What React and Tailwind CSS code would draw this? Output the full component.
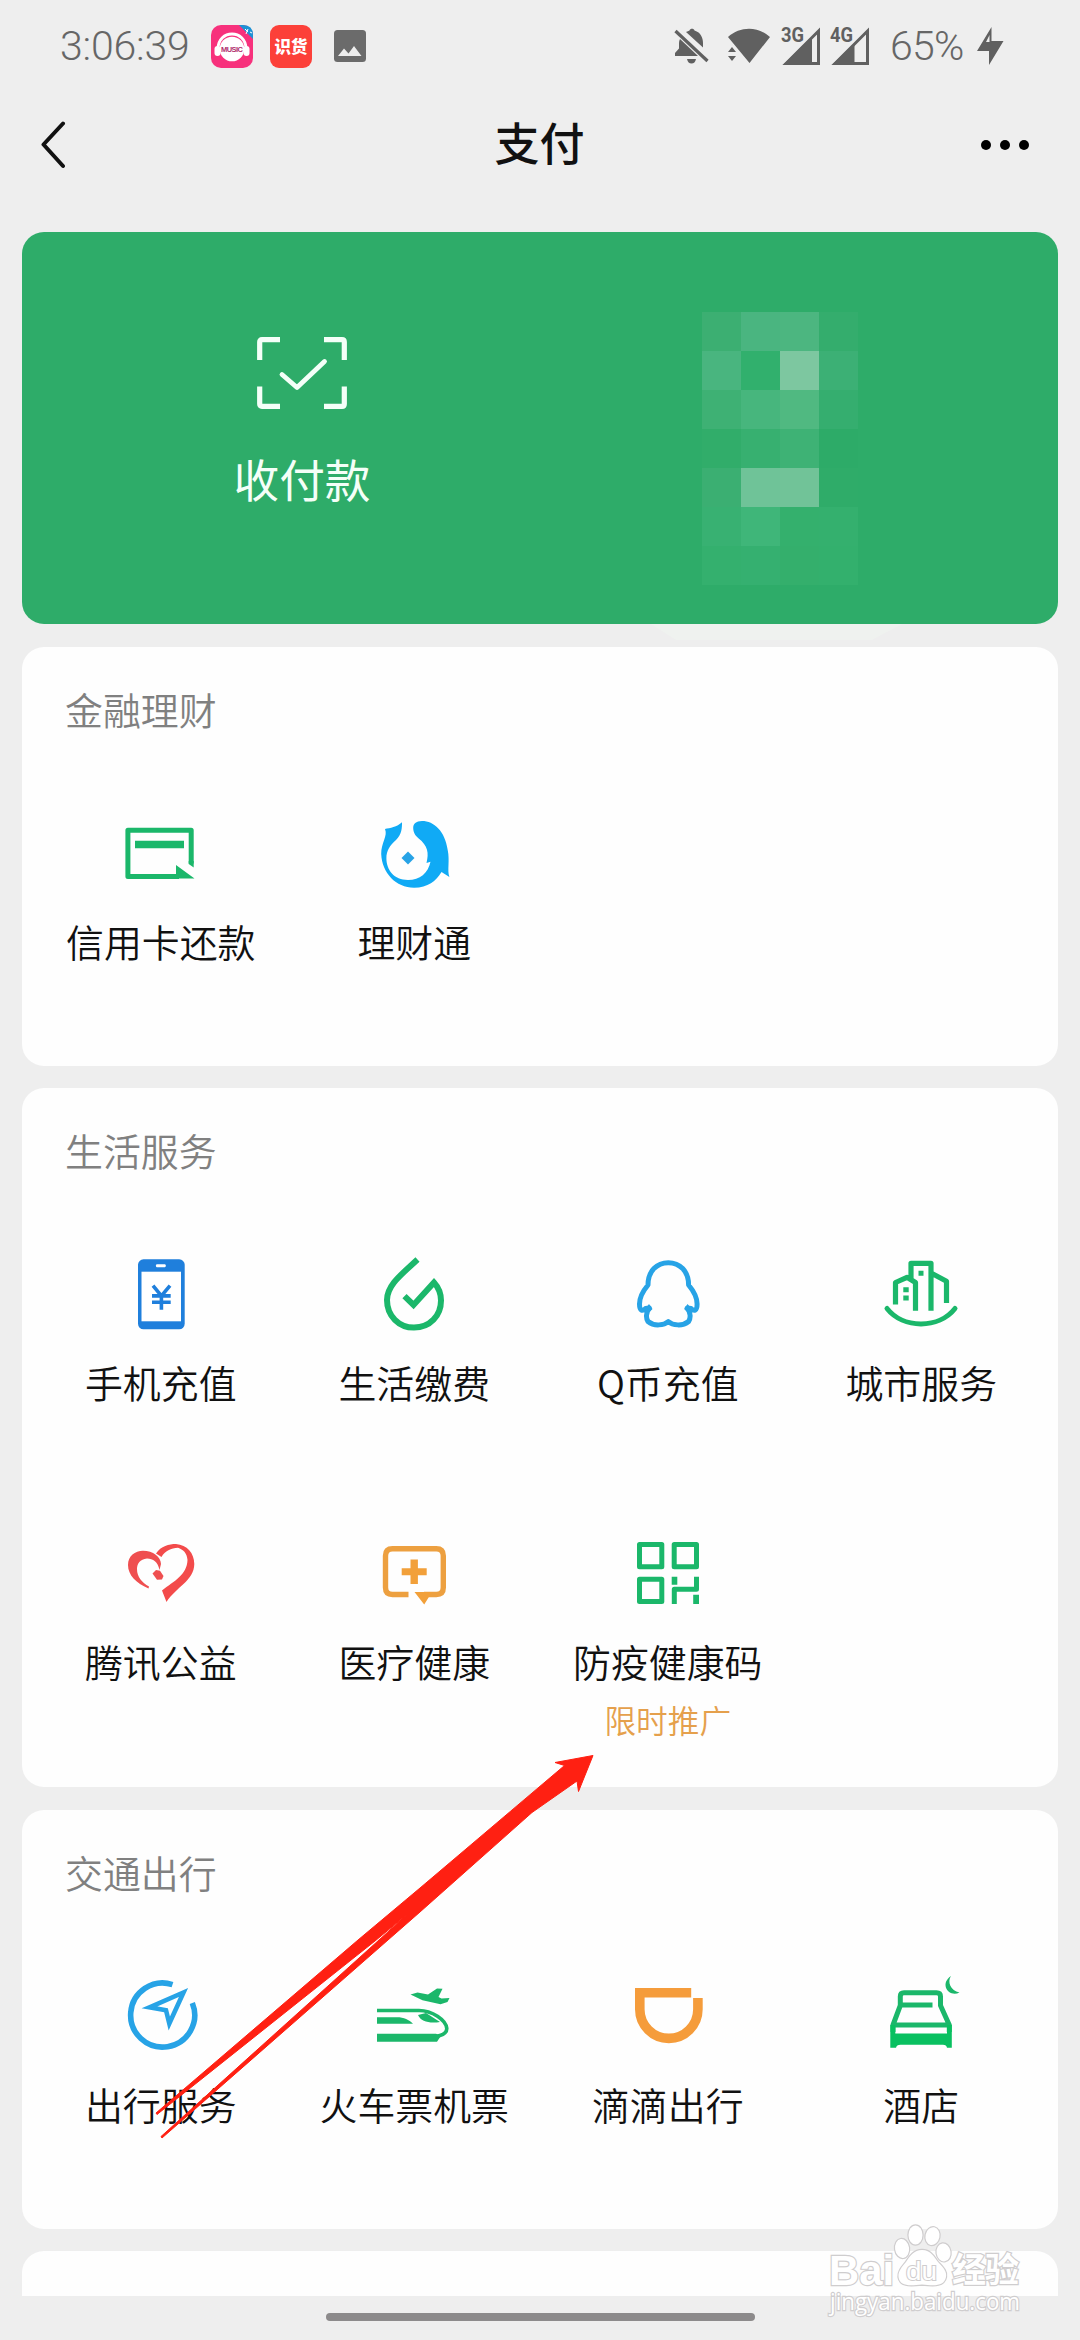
const GREEN = "#1bb76a";
const BLUE = "#27a3e6";

function Icon({ children }) {
  return (
    <svg viewBox="0 0 80 80" className="h-[80px] w-[80px] shrink-0 overflow-visible" fill="none">
      {children}
    </svg>
  );
}

const icons = {
  card: (
    <Icon>
      <path d="M70.2 50.5V17.2H6.9V63.5H58" stroke={GREEN} strokeWidth="5" strokeLinejoin="round" />
      <path d="M14 27.7h49v7.6H14zM55 52L73.5 65.5H55z" fill={GREEN} />
      <path d="M67.7 48h5v6.5l-5-3.5z" fill={GREEN} />
    </Icon>
  ),
  wealth: (
    <Icon>
      <path
        fill="#10aaf5"
        d="M28 9.3C23 14 16 15 11 16c3 7-4 14-3.8 25C8 60 22 74.7 40 74.7c14 0 22-6.700 27.500-15.700l7.900 5c-2.400-7 .6-16-1.700-27C71 18 60 8 48 8c-6 0-9 3-8.800 7.300.3 4.700 1.800 6.700 5.200 10C54 33 55 40 52.500 50l4-1.300C54 60 46 67 34 67 20 67 12.400 57 12.400 45.300 12.400 38 16 32 22 27c6-6 6-12 6-17.700z"
      />
      <path d="M34 38.500l6.500 6.500-6.500 6.500-6.500-6.500z" fill="#27a3e6" />
    </Icon>
  ),
  phone: (
    <Icon>
      <rect x="17" y="5.300" width="46.700" height="70" rx="5.500" fill="#1f7fdc" />
      <rect x="20.500" y="17.700" width="39.500" height="49.600" fill="#fff" />
      <rect x="35" y="10.300" width="9.700" height="3" rx="1" fill="#fff" />
      <path d="M32 31.700L40.400 42 49 31.700M40.400 41v14.700M31 41.900h18.700M31 48.300h18.700" stroke="#1f7fdc" strokeWidth="3.600" />
    </Icon>
  ),
  drop: (
    <Icon>
      <path
        d="M43.500 5.500C28 20 13 31 13 46c0 16 12 27.600 27 27.600 16 0 27-12 27-27.100 0-7-2-12.500-7-18L39.500 51l-9-8.800"
        stroke={GREEN}
        strokeWidth="6"
      />
    </Icon>
  ),
  penguin: (
    <Icon>
      <path
        d="M40.300 8.700C29 8.700 20 17 20 31c-5 6-8.500 12-8.500 19 0 7 3 7.500 6 4.500l3.800-.5c-3.800 5-3.300 10.500-1.300 13.500 6 5 16 4 20.300 0 4.300 4 14.300 5 20.300 0 2-3 2.500-8.500-1.300-13.500l3.800.5c3 3 6 2.500 6-4.500 0-7-3.500-13-8.500-19C60.600 17 51.600 8.700 40.300 8.700z"
        stroke={BLUE}
        strokeWidth="5"
        strokeLinejoin="round"
      />
      <path d="M18 54l3-4 3.500 5-3 3zM62.600 54l-3-4-3.500 5 3 3z" fill={BLUE} />
    </Icon>
  ),
  city: (
    <Icon>
      <path
        d="M14.500 50.500V28.500L26 23.300l8.500 5.200V56.700M30 26V9.300h20V56.700M51 19.500l14.500 7.700V49"
        stroke={GREEN}
        strokeWidth="5.200"
        strokeLinejoin="round"
      />
      <path d="M6 54.500C22 75 58 75 74 54.500" stroke={GREEN} strokeWidth="5" strokeLinecap="round" />
      <path d="M37.500 16.800h5v5h-5zM22.300 33.200h5.400v5h-5.400zM22.300 41.500h5.400v5h-5.400z" fill={GREEN} />
    </Icon>
  ),
  heart: (
    <Icon>
      <path
        fill="#ef4f50"
        d="M27.500 55.500C15 50 7 42 7 32c0-9 7-14.300 15-14.300C32 17.700 40 24 40 31l-1.500 6C37 29 32 25.500 26 25.500 19 26 16 31 16 36c0 8 5 13.500 12 17.500z"
      />
      <path
        fill="#f34b4b"
        d="M35 20.500C40 13 48 11 55 11c11 1 18.300 9 18.300 20C73 48 55 54 45.500 69L41 57.500C53 48 66 42 66.500 27 66 20 62 16.500 57 14.800c-7 .2-13 3.200-16.500 9.200z"
      />
      <path fill="#ef4f50" d="M31.500 40.500l3.500-3.500 4 .8 3.500 5.200-1.500 3.500-5 .3z" />
    </Icon>
  ),
  medical: (
    <Icon>
      <path
        d="M34.500 61.500H18.500Q11.500 61.500 11.500 54.500V22.800Q11.500 15.800 18.500 15.800H62.300Q69.300 15.800 69.300 22.800V54.500Q69.300 61.500 62.300 61.500H50"
        stroke="#eda040"
        strokeWidth="5.400"
      />
      <path d="M40.500 59H58l-7.800 12.500zM27.700 35.200h8.800V26.400h7.400v8.800h8.800v7h-8.800V51h-7.400v-8.800h-8.800z" fill="#f2a03a" />
    </Icon>
  ),
  qr: (
    <Icon>
      <path
        d="M11.500 11.500h22.300v22.300H11.500zM46.200 11.500h22.300v22.300H46.200zM11.500 46.200h22.300v22.300H11.500zM46.300 71V56.300h22.200V43.700"
        stroke={GREEN}
        strokeWidth="5"
        strokeLinejoin="round"
      />
      <path d="M43.700 43.700h5.600v8h-5.600zM65.200 61.700H71V71h-5.800z" fill={GREEN} />
    </Icon>
  ),
  compass: (
    <Icon>
      <path d="M51.500 8.600A32 32 0 1 0 71.300 27" stroke={BLUE} strokeWidth="5.600" />
      <path d="M28.500 31.300L62.500 16.500 48.300 47.500 45 34.200z" stroke={BLUE} strokeWidth="4.600" />
    </Icon>
  ),
  train: (
    <Icon>
      <path d="M3 34.500H45C58 34.500 72 44 72.800 52.500 72.800 57 68 59.500 62 60.500" stroke={GREEN} strokeWidth="3.600" />
      <path
        fill={GREEN}
        d="M3 41.200h20c7 0 12 2.500 16 6.500H3zM3 57.700h59l5 2-4 6H3zM44 39l8-2 14 9c-10 1.500-19 0-22-7zM36.500 18.500l7-2 10.500 2 9-6 5.500.2L64.500 21l3 1.500 8-.5-2 4-7 2.300-18-4z"
      />
    </Icon>
  ),
  didi: (
    <Icon>
      <path d="M63.200 16.700H11.800V33.300A29 29 0 0 0 69.900 33.300V22" stroke="#f59c3b" strokeWidth="9.600" />
    </Icon>
  ),
  hotel: (
    <Icon>
      <path
        d="M12 56V49L19.300 29.500V20.500Q19.300 16.700 23 16.700H55.500Q59.500 16.700 59.500 20.500V29.500L68.300 49V56M12 49H68.300M19.300 29H51.500"
        stroke={GREEN}
        strokeWidth="5"
        strokeLinejoin="round"
      />
      <path d="M9.300 49h5v8.500H66V49h4.800v22.700H66q-.5-3-4-3H19.500q-4 0-4.500 3H9.300z" fill="#09c060" />
      <path d="M70 0c-4 6-.5 14.500 8.500 16.500C68 22 58 8 70 0z" fill={GREEN} />
    </Icon>
  ),
};

function Service({ icon, label, note }) {
  return (
    <div className="flex h-[279px] flex-col items-center">
      {icons[icon]}
      <span className="mt-[24px] text-[37.900px] leading-[48px] font-[350] whitespace-nowrap text-[#111]">{label}</span>
      {note && <span className="mt-[13px] text-[31.700px] leading-[42px] font-[350] text-[#e5a04c]">{note}</span>}
    </div>
  );
}

function Section({ title, items, className }) {
  return (
    <section className={`shrink-0 overflow-hidden rounded-[22px] bg-[#fefefe] pr-[10px] pl-[12px] ${className}`}>
      <h2 className="mt-[38px] ml-[31px] h-[128px] text-[37.900px] leading-[48px] font-[350] text-[#808080]">{title}</h2>
      <div className="grid grid-cols-4">
        {items.map((item) => (
          <Service key={item.label} {...item} />
        ))}
      </div>
    </section>
  );
}

const finance = [
  { icon: "card", label: "信用卡还款" },
  { icon: "wealth", label: "理财通" },
];
const life = [
  { icon: "phone", label: "手机充值" },
  { icon: "drop", label: "生活缴费" },
  { icon: "penguin", label: "Q币充值" },
  { icon: "city", label: "城市服务" },
  { icon: "heart", label: "腾讯公益" },
  { icon: "medical", label: "医疗健康" },
  { icon: "qr", label: "防疫健康码", note: "限时推广" },
];
const travel = [
  { icon: "compass", label: "出行服务" },
  { icon: "train", label: "火车票机票" },
  { icon: "didi", label: "滴滴出行" },
  { icon: "hotel", label: "酒店" },
];

const mosaic = [
  "#3caf72", "#4ab580", "#4cb680", "#34ad6d",
  "#49b57f", "#31b06d", "#7dc7a0", "#3cb075",
  "#3eb174", "#47b67d", "#50b981", "#35ae6f",
  "#31ad6a", "#37b070", "#3eb275", "#2dab68",
  "#3baf72", "#6fc398", "#71c398", "#2fac69",
  "#38b172", "#3fb679", "#34b06d", "#34b06e",
  "#34b06e", "#35b070", "#34af6c", "#33b06d",
];

function StatusBar() {
  return (
    <div className="flex h-[92px] shrink-0 items-center pl-[60px] text-[#666]">
      <span className="w-[151px] font-[Roboto] text-[41px] leading-[48px] font-light tracking-[-0.200px] whitespace-nowrap">3:06:39</span>
      <svg className="h-[43px] w-[42px]" viewBox="0 0 42 43">
        <rect width="42" height="43" rx="10" fill="#f7317c" />
        <path d="M28 0H32Q42 0 42 10V14z" fill="#1b93d6" />
        <path d="M34 4l3 3M37 4l-2 5M39 7l2 1" stroke="#fff" strokeWidth="1" />
        <circle cx="21" cy="24" r="12.300" fill="#fff" />
        <path d="M7 24C7 4 35 4 35 24" stroke="#fff" strokeWidth="3" fill="none" />
        <rect x="3.500" y="21" width="6" height="10" rx="3" fill="#fff" />
        <rect x="32.500" y="21" width="6" height="10" rx="3" fill="#fff" />
        <text x="10" y="27" textLength="22" fontSize="7.500" fontWeight="700" fontFamily="Liberation Sans, sans-serif" fill="#b0306c">MUSIC</text>
      </svg>
      <div className="ml-[17px] flex h-[43px] w-[42px] items-center justify-center rounded-[9px] bg-[#fc4039] text-[16.500px] leading-none font-black text-white">识货</div>
      <svg className="ml-[22px] h-[32px] w-[32px]" viewBox="0 0 32 32">
        <rect width="32" height="32" rx="3.500" fill="#6b6b6b" />
        <path d="M4 26l6-7.500 4.500 5L20 16l7.500 10z" fill="#eee" />
      </svg>

      <svg className="ml-[308px] h-[36px] w-[36px]" viewBox="0 0 36 36" fill="#606060">
        <path d="M12 4q2-1 3.500-1.500C16 0 20 0 20.500 2.500 27 4.500 29 10 29 15v4.500zM6 11L24 28H1v-3l4-4.500V15q0-2 1-4zM13 31h9q-1 4.500-4.500 4.500T13 31z" />
        <path d="M1.500 3L33.500 33" stroke="#606060" strokeWidth="3.200" />
        <path d="M5 2L36 31" stroke="#eee" strokeWidth="1.500" />
      </svg>
      <svg className="ml-[18px] h-[36px] w-[42px]" viewBox="0 0 42 36" fill="#606060">
        <path d="M0 9C12-2 30-2 42 9L21.500 35zM0 24l4-5 4 5zM0 28h8l-4 5z" />
      </svg>
      <Signal name="3G" level="M3 37L31 10V37z" gap="ml-[11px]" />
      <Signal name="4G" level="M3 37L24.500 16.500V37z" gap="ml-[9px]" />
      <span className="ml-[20px] w-[78px] font-[Roboto] text-[41px] leading-[48px] font-light tracking-[-0.700px] whitespace-nowrap">65%</span>
      <svg className="ml-[9px] h-[38px] w-[27px]" viewBox="0 0 27 38" fill="#606060">
        <path fillRule="evenodd" d="M14.500 0V14H26.500L12 38V24H0zM9 15h3.500V8z" />
      </svg>
    </div>
  );
}

function Signal({ name, level, gap }) {
  return (
    <svg className={`${gap} h-[38px] w-[40px] shrink-0 overflow-visible`} viewBox="0 0 40 38" fill="#606060">
      <path d="M5 36.500L37.500 4V36.500z" fill="none" stroke="#606060" strokeWidth="3" />
      <path d={level} />
      <text x="0" y="15" textLength="23" lengthAdjust="spacingAndGlyphs" fontSize="20" fontWeight="700" fontFamily="Roboto, sans-serif">{name}</text>
    </svg>
  );
}

function NavBar() {
  return (
    <div className="flex h-[140px] shrink-0 items-start justify-between pt-[24px] pr-[51px] pl-[40px]">
      <svg className="mt-[5px] h-[48px] w-[58px]" viewBox="0 0 58 48" fill="none">
        <path d="M23 2.500L3.500 23.500 23 45" stroke="#111" strokeWidth="4" strokeLinecap="round" strokeLinejoin="round" />
      </svg>
      <h1 className="mt-[-3px] text-[45px] leading-[58px] font-medium text-[#111]">支付</h1>
      <div className="mt-[24px] flex gap-[9px]">
        <i className="h-[10px] w-[10px] rounded-full bg-black" />
        <i className="h-[10px] w-[10px] rounded-full bg-black" />
        <i className="h-[10px] w-[10px] rounded-full bg-black" />
      </div>
    </div>
  );
}

function PayPanel() {
  return (
    <div className="grid h-[392px] shrink-0 grid-cols-2 rounded-[22px] bg-[#2eac69]">
      <div className="flex flex-col items-center pt-[105px] pl-[42px]">
        <svg className="h-[72px] w-[90px]" viewBox="0 0 90 72" fill="none" stroke="#f4fff8">
          <path d="M2.700 23V5Q2.700 2.600 5 2.600H23M67 2.600H85Q87.300 2.600 87.300 5V23M87.300 49.500V67Q87.300 69.400 85 69.400H67M23 69.400H5Q2.700 69.400 2.700 67V49.500" strokeWidth="5.200" />
          <path d="M25 37.500L40 50.500 67.500 24.500" strokeWidth="4.800" strokeLinecap="round" strokeLinejoin="round" />
        </svg>
        <span className="mt-[40px] text-[45.700px] leading-[58px] text-[#f4fff8]">收付款</span>
      </div>
      <div className="mt-[80px] ml-[162px] grid h-[273px] w-[156px] grid-cols-4 grid-rows-7">
        {mosaic.map((color, i) => (
          <span key={i} style={{ backgroundColor: color }} />
        ))}
      </div>
    </div>
  );
}

function Watermark() {
  return (
    <svg className="absolute top-[2215px] left-[820px] h-[110px] w-[210px] overflow-visible" viewBox="820 2215 210 110" fill="#fff" stroke="#cfcdce" strokeWidth="2.400" paintOrder="stroke">
      <text x="829" y="2285" textLength="65" lengthAdjust="spacingAndGlyphs" fontSize="43" fontWeight="700" fontFamily="Liberation Sans, sans-serif">Bai</text>
      <ellipse cx="902" cy="2248.500" rx="7" ry="9.500" transform="rotate(-8 902 2248)" />
      <ellipse cx="915.500" cy="2235" rx="7" ry="9.500" />
      <ellipse cx="932.500" cy="2236" rx="7" ry="9" transform="rotate(12 932 2236)" />
      <ellipse cx="943.500" cy="2252.500" rx="7" ry="9" transform="rotate(-8 943 2252)" />
      <path d="M922 2250C931 2250 934 2257 938 2262 944 2268 947 2272 946 2277 944 2286 936 2286 922 2284.500 908 2286 900 2286 898.500 2277 898 2271 902 2267 906 2262 910 2256 914 2250 922 2250z" />
      <text x="906" y="2280" textLength="31" lengthAdjust="spacingAndGlyphs" fontSize="26" fontFamily="Liberation Sans, sans-serif" strokeWidth="2">du</text>
      <text x="952" y="2282" textLength="67" fontSize="34" fontWeight="700" fontFamily="Noto Sans CJK SC, sans-serif">经验</text>
      <text x="830" y="2310" textLength="190" lengthAdjust="spacingAndGlyphs" fontSize="24" fontFamily="Open Sans, sans-serif">jingyan.baidu.com</text>
    </svg>
  );
}

export default function App() {
  return (
    <div className="relative flex h-[2340px] w-[1080px] flex-col overflow-hidden bg-[#eeeeee] font-['Noto_Sans_CJK_SC',sans-serif]">
      <StatusBar />
      <NavBar />
      <main className="flex flex-col px-[22px]">
        <PayPanel />
        <div className="ml-[629px] h-[16px] w-[251px] shrink-0 bg-[#eff2ef] [clip-path:polygon(0_0,100%_0,88%_100%,10%_100%)]" />
        <Section title="金融理财" items={finance} className="mt-[7px] h-[419px]" />
        <Section title="生活服务" items={life} className="mt-[22px] h-[699px]" />
        <Section title="交通出行" items={travel} className="mt-[23px] h-[419px]" />
        <div className="mt-[22px] h-[45px] shrink-0 rounded-t-[22px] bg-[#fefefe]" />
      </main>
      <div className="mx-auto mt-[17px] h-[8px] w-[429px] shrink-0 rounded-full bg-[#8c8a8b]" />
      <svg className="absolute top-[1750px] left-[150px] h-[395px] w-[450px] overflow-visible" viewBox="150 1750 450 395">
        <path
          d="M593 1755.500L555 1762.500 564.500 1765.500 420 1888 358 1940 156 2113 157 2114.500 375 1941 407 1914.600 379 1940 161 2136.500 162 2138 388 1940 420 1912 532 1812.500 577 1781 578.500 1791.500z"
          fill="#ff2012"
          stroke="#ff2012"
          strokeWidth="1"
        />
      </svg>
      <Watermark />
    </div>
  );
}
